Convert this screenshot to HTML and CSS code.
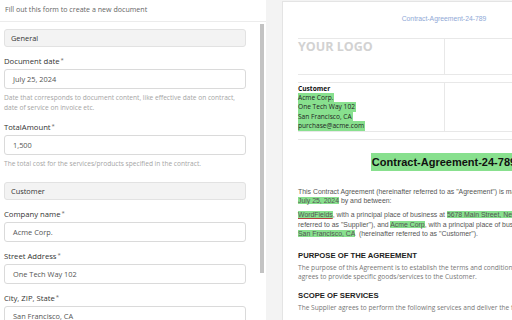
FILE: index.html
```html
<!DOCTYPE html>
<html lang="en">
<head>
<meta charset="utf-8">
<title>New document</title>
<link rel="stylesheet" href="styles.css">
</head>
<body>
<div class="app">
  <aside class="form-pane">
    <div class="form-head">Fill out this form to create a new document</div>
    <div class="form-scroll">
      <div class="section-title">General</div>
      <div class="field">
        <div class="label">Document date<span class="req">*</span></div>
        <div class="input">July 25, 2024</div>
        <div class="hint">Date that corresponds to document content, like effective date on contract, date of service on invoice etc.</div>
      </div>
      <div class="field">
        <div class="label">TotalAmount<span class="req">*</span></div>
        <div class="input">1,500</div>
        <div class="hint">The total cost for the services/products specified in the contract.</div>
      </div>
      <div class="section-title">Customer</div>
      <div class="field">
        <div class="label">Company name<span class="req">*</span></div>
        <div class="input">Acme Corp.</div>
      </div>
      <div class="field">
        <div class="label">Street Address<span class="req">*</span></div>
        <div class="input">One Tech Way 102</div>
      </div>
      <div class="field">
        <div class="label">City, ZIP, State<span class="req">*</span></div>
        <div class="input">San Francisco, CA</div>
      </div>
    </div>
    <div class="scroll-thumb"></div>
  </aside>
  <main class="preview">
    <div class="page">
      <div class="doc-id">Contract-Agreement-24-789</div>
      <table class="head-table">
        <tr class="row-logo">
          <td class="cell-left"><div class="logo">YOUR LOGO</div></td>
          <td></td>
        </tr>
        <tr class="row-gap"><td colspan="2"></td></tr>
        <tr class="row-party">
          <td class="cell-left">
            <div class="party-title">Customer</div>
            <div><span class="hl-line">Acme Corp.</span></div>
            <div><span class="hl-line">One Tech Way 102</span></div>
            <div><span class="hl-line">San Francisco, CA</span></div>
            <div><span class="hl-line">purchase@acme.com</span></div>
          </td>
          <td></td>
        </tr>
        <tr class="row-gap"><td colspan="2"></td></tr>
      </table>
      <h1 class="doc-title"><span class="hl-title">Contract-Agreement-24-789</span></h1>
      <p class="intro">This Contract Agreement (hereinafter referred to as "Agreement") is made and entered into on<br><span class="hl">July 25, 2024</span> by and between:</p>
      <p class="intro"><span class="hl spell">WordFields</span>, with a principal place of business at <span class="hl">5678 Main Street, New York, NY</span> (hereinafter<br>referred to as "Supplier"), and <span class="hl">Acme Corp</span>, with a principal place of business at <span class="hl">One Tech Way 102</span>,<br><span class="hl">San Francisco, CA</span> &nbsp;(hereinafter referred to as "Customer").</p>
      <h2 class="doc-h">PURPOSE OF THE AGREEMENT</h2>
      <p class="body">The purpose of this Agreement is to establish the terms and conditions under which the Supplier<br>agrees to provide specific goods/services to the Customer.</p>
      <h2 class="doc-h doc-h-next">SCOPE OF SERVICES</h2>
      <p class="body">The Supplier agrees to perform the following services and deliver the following goods:</p>
    </div>
  </main>
</div>
</body>
</html>
```
FILE: styles.css
```css
* { box-sizing: border-box; }
html, body { margin: 0; padding: 0; }
body {
  width: 512px;
  height: 320px;
  overflow: hidden;
  background: #ffffff;
  font-family: "Open Sans", "Noto Sans", sans-serif;
  color: #333;
}
.app {
  display: flex;
  height: 320px;
}
.form-pane {
  position: relative;
  width: 266px;
  flex: none;
  display: flex;
  flex-direction: column;
  background: #fff;
}
.form-head {
  height: 22px;
  line-height: 19px;
  padding-left: 5px;
  font-size: 7.1px;
  color: #666;
  border-bottom: 1px solid #ececec;
  flex: none;
}
.form-scroll {
  flex: 1;
  overflow: hidden;
  padding: 7px 20px 0 4px;
}
.scroll-thumb {
  position: absolute;
  left: 260px;
  top: 24px;
  width: 4px;
  height: 249px;
  background: #c3c3c3;
}
.section-title {
  height: 18px;
  line-height: 16px;
  padding: 0 6px;
  font-size: 7.4px;
  color: #333;
  background: #f3f3f3;
  border: 1px solid #e2e2e2;
  border-radius: 3px;
}
.field + .section-title { margin-top: 13px; }
.field { margin-top: 7px; }
.label {
  line-height: 12px;
  font-size: 7.7px;
  color: #333;
  margin-bottom: 2px;
}
.req { font-size: 6px; color: #666; vertical-align: 2px; margin-left: 1px; }
.input {
  height: 20px;
  line-height: 18px;
  padding: 0 8px;
  font-size: 7.4px;
  color: #555;
  background: #fff;
  border: 1px solid #dadada;
  border-radius: 3px;
}
.hint {
  margin-top: 4px;
  line-height: 10px;
  font-size: 6.6px;
  color: #a5a5a5;
}
.preview {
  flex: 1;
  min-width: 0;
  overflow: hidden;
  background: #f3f3f3;
  padding: 1px 0 0 16px;
}
.page {
  width: 324px;
  min-height: 400px;
  background: #fff;
  border: 1px solid #e4e4e4;
  padding: 12px 15px 0 15px;
  white-space: nowrap;
}
.doc-id {
  text-align: center;
  font-family: "Liberation Sans", Arial, sans-serif;
  font-size: 6.8px;
  line-height: 10px;
  color: #8fa9d6;
}
.head-table {
  width: 100%;
  margin-top: 14px;
  border-collapse: collapse;
  table-layout: fixed;
}
.head-table td {
  padding: 0;
  border-top: 1px solid #e8e8e8;
  border-bottom: 1px solid #e8e8e8;
  vertical-align: top;
}
.head-table .cell-left { border-right: 1px solid #e8e8e8; width: 50%; }
.row-logo td { height: 36px; }
.row-gap td { height: 8px; }
.row-party td { height: 45px; }
.logo {
  font-family: "Open Sans", sans-serif;
  font-weight: 700;
  font-size: 12.5px;
  line-height: 16px;
  color: #d2d2d2;
}
.row-party .cell-left {
  font-size: 6.6px;
  line-height: 9.4px;
  color: #222;
  padding-top: 0.5px;
}
.party-title { font-weight: 700; color: #111; }
.hl-line {
  display: inline-block;
  background: #88e08e;
  line-height: 9.4px;
  padding-right: 1px;
}
.hl { background: #88e08e; }
.spell { text-decoration: underline #b04040; text-decoration-thickness: 0.6px; text-underline-offset: 1px; }
.doc-title {
  margin: 13px 0 0 0;
  text-align: center;
  font-family: "Liberation Sans", Arial, sans-serif;
  font-weight: 700;
  font-size: 11px;
  line-height: 18px;
  color: #111;
}
.hl-title {
  display: inline-block;
  background: #88e08e;
  padding: 0 1px;
}
.intro {
  margin: 16px 0 0 0;
  font-family: "Liberation Sans", Arial, sans-serif;
  font-size: 6.9px;
  line-height: 9.4px;
  color: #555;
}
.intro + .intro { margin-top: 5px; }
.doc-h {
  margin: 12px 0 0 0;
  font-family: "Liberation Sans", Arial, sans-serif;
  font-weight: 700;
  font-size: 7.7px;
  line-height: 10px;
  color: #222;
}
.doc-h-next { margin-top: 10px; }
.body {
  margin: 2px 0 0 0;
  font-family: "Open Sans", sans-serif;
  font-size: 6.6px;
  line-height: 9px;
  color: #777;
}
```
